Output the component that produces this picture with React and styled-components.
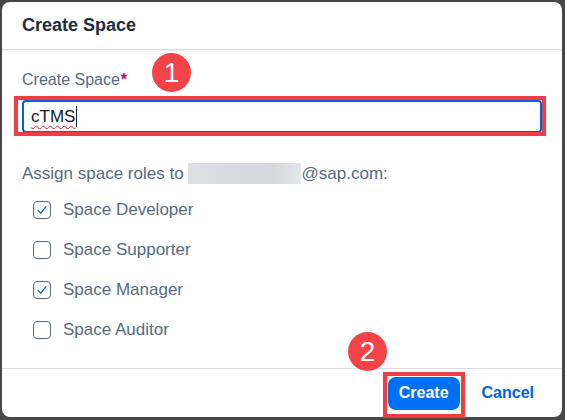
import styled, { createGlobalStyle } from "styled-components";

const GlobalStyle = createGlobalStyle`
  html, body {
    margin: 0;
    padding: 0;
    background: #474747;
  }
  body {
    font-family: "Liberation Sans", Arial, sans-serif;
  }
`;

const Frame = styled.div`
  padding: 2px 3px 3px 2px;
`;

const Dialog = styled.div`
  position: relative;
  width: 560px;
  height: 415px;
  background: #ffffff;
  border-radius: 8px;
  display: flex;
  flex-direction: column;
`;

const Header = styled.header`
  height: 48px;
  box-sizing: border-box;
  padding: 0 20px;
  display: flex;
  align-items: center;
  border-bottom: 1px solid #d9dde1;
  box-shadow: 0 1px 2px rgba(0, 0, 0, 0.08);
`;

const Title = styled.h1`
  margin: 0;
  font-size: 18px;
  font-weight: bold;
  color: #1d2d3e;
`;

const Content = styled.div`
  flex: 1;
  padding: 20px 20px 0;
  display: flex;
  flex-direction: column;
`;

const Label = styled.label`
  font-size: 16px;
  line-height: 20px;
  color: #556b82;
`;

const Required = styled.span`
  color: #ba066c;
  font-weight: bold;
  margin-left: 1px;
`;

const Field = styled.div`
  position: relative;
  margin-top: 10px;
  height: 33px;
  box-sizing: border-box;
  border: 2px solid #0064d9;
  border-radius: 4px;
  padding: 0 7px;
  display: flex;
  align-items: center;
  font-size: 17px;
  color: #131e29;
`;

const Misspelled = styled.span`
  text-decoration: underline wavy #e02020;
  text-decoration-thickness: 1px;
  text-underline-offset: 3px;
`;

const Caret = styled.span`
  display: inline-block;
  width: 1px;
  height: 21px;
  background: #131e29;
  margin-left: 1px;
`;

const Ring = styled.span`
  position: absolute;
  top: ${(p) => p.$top}px;
  left: ${(p) => p.$left}px;
  right: ${(p) => p.$right}px;
  bottom: ${(p) => p.$bottom}px;
  border: 4px solid #ee3d43;
  pointer-events: none;
`;

const Intro = styled.div`
  margin-top: 30px;
  font-size: 17px;
  line-height: 20px;
  color: #556b82;
  display: flex;
  align-items: center;
`;

const Blur = styled.span`
  display: inline-block;
  width: 113px;
  height: 21px;
  margin: 0 1px 0 4px;
  background: linear-gradient(90deg, #dcdfe3, #d8dbdf 45%, #d4d7db 75%, #e6e8eb);
`;

const Roles = styled.ul`
  list-style: none;
  margin: 6px 0 0;
  padding: 0;
`;

const Role = styled.li`
  height: 40px;
  display: flex;
  align-items: center;
  gap: 12px;
  padding-left: 11px;
  font-size: 17px;
  color: #556b82;
`;

const Box = styled.span`
  width: 18px;
  height: 18px;
  box-sizing: border-box;
  border: 1px solid #556b82;
  border-radius: 4px;
  display: flex;
  align-items: center;
  justify-content: center;
`;

const Footer = styled.footer`
  height: 49px;
  box-sizing: border-box;
  border-top: 1px solid #d9dde1;
  display: flex;
  align-items: center;
  justify-content: flex-end;
  gap: 10px;
  padding-right: 16px;
`;

const Button = styled.button`
  position: relative;
  height: 33px;
  padding: 0 ${(p) => (p.$primary ? 11 : 12)}px;
  border: none;
  border-radius: 8px;
  background: ${(p) => (p.$primary ? "#0070f2" : "transparent")};
  color: ${(p) => (p.$primary ? "#ffffff" : "#0064d9")};
  font-family: inherit;
  font-size: 16px;
  font-weight: bold;
  cursor: pointer;
`;

const Badge = styled.div`
  position: absolute;
  left: ${(p) => p.$x}px;
  top: ${(p) => p.$y}px;
  width: 39px;
  height: 39px;
  border-radius: 50%;
  background: #f24447;
  color: #ffffff;
  font-size: 28px;
  display: flex;
  align-items: center;
  justify-content: center;
`;

const Check = () => (
  <svg width="14" height="14" viewBox="0 0 14 14">
    <path d="M3 7.4 L5.8 10.2 L11 3.6" fill="none" stroke="#0064d9" strokeWidth="1.3" strokeLinecap="round" strokeLinejoin="round" />
  </svg>
);

const roles = [
  { name: "Space Developer", checked: true },
  { name: "Space Supporter", checked: false },
  { name: "Space Manager", checked: true },
  { name: "Space Auditor", checked: false },
];

const App = () => (
  <>
    <GlobalStyle />
    <Frame>
      <Dialog>
        <Header>
          <Title>Create Space</Title>
        </Header>
        <Content>
          <Label>
            Create Space<Required>*</Required>
          </Label>
          <Field>
            <Misspelled>cTMS</Misspelled>
            <Caret />
            <Ring $top={-6} $left={-10} $right={-6} $bottom={-5} />
          </Field>
          <Intro>
            Assign space roles to <Blur />@sap.com:
          </Intro>
          <Roles>
            {roles.map((r) => (
              <Role key={r.name}>
                <Box>{r.checked && <Check />}</Box>
                {r.name}
              </Role>
            ))}
          </Roles>
        </Content>
        <Footer>
          <Button $primary>
            Create
            <Ring $top={-5} $left={-5} $right={-5} $bottom={-8} />
          </Button>
          <Button>Cancel</Button>
        </Footer>
        <Badge $x={150} $y={51}>1</Badge>
        <Badge $x={346} $y={330}>2</Badge>
      </Dialog>
    </Frame>
  </>
);

export default App;
